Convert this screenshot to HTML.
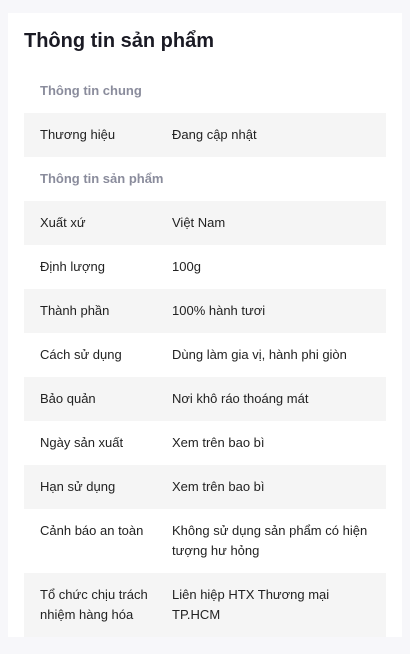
<!DOCTYPE html>
<html><head><meta charset="utf-8"><style>
body{margin:0;background:#f7f7fa;font-family:"Liberation Sans",sans-serif;}
.card{position:absolute;left:8px;top:13px;width:394px;height:624px;background:#fff;overflow:hidden;}
h1{margin:0;position:absolute;left:16px;top:15px;font-size:20px;font-weight:bold;color:#1a1a24;line-height:26px;}
table{position:absolute;left:16px;top:56px;width:362px;border-collapse:collapse;font-size:13px;color:#222;table-layout:fixed;}
td{padding:12px 16px 12px 16px;line-height:20px;vertical-align:top;}
td.k{width:116px;padding-right:0;}
tr.g td{background:#f5f5f5;}
tr.h td{font-weight:bold;color:#8a8c9c;}
</style></head><body>
<div class="card">
<h1>Thông tin sản phẩm</h1>
<table>
<colgroup><col style="width:132px"><col></colgroup>
<tr class="h"><td colspan="2">Thông tin chung</td></tr>
<tr class="g"><td class="k">Thương hiệu</td><td>Đang cập nhật</td></tr>
<tr class="h"><td colspan="2">Thông tin sản phẩm</td></tr>
<tr class="g"><td class="k">Xuất xứ</td><td>Việt Nam</td></tr>
<tr><td class="k">Định lượng</td><td>100g</td></tr>
<tr class="g"><td class="k">Thành phần</td><td>100% hành tươi</td></tr>
<tr><td class="k">Cách sử dụng</td><td>Dùng làm gia vị, hành phi giòn</td></tr>
<tr class="g"><td class="k">Bảo quản</td><td>Nơi khô ráo thoáng mát</td></tr>
<tr><td class="k">Ngày sản xuất</td><td>Xem trên bao bì</td></tr>
<tr class="g"><td class="k">Hạn sử dụng</td><td>Xem trên bao bì</td></tr>
<tr><td class="k">Cảnh báo an toàn</td><td>Không sử dụng sản phẩm có hiện tượng hư hỏng</td></tr>
<tr class="g"><td class="k">Tổ chức chịu trách nhiệm hàng hóa</td><td>Liên hiệp HTX Thương mại<br>TP.HCM</td></tr>
</table>
</div>
</body></html>
